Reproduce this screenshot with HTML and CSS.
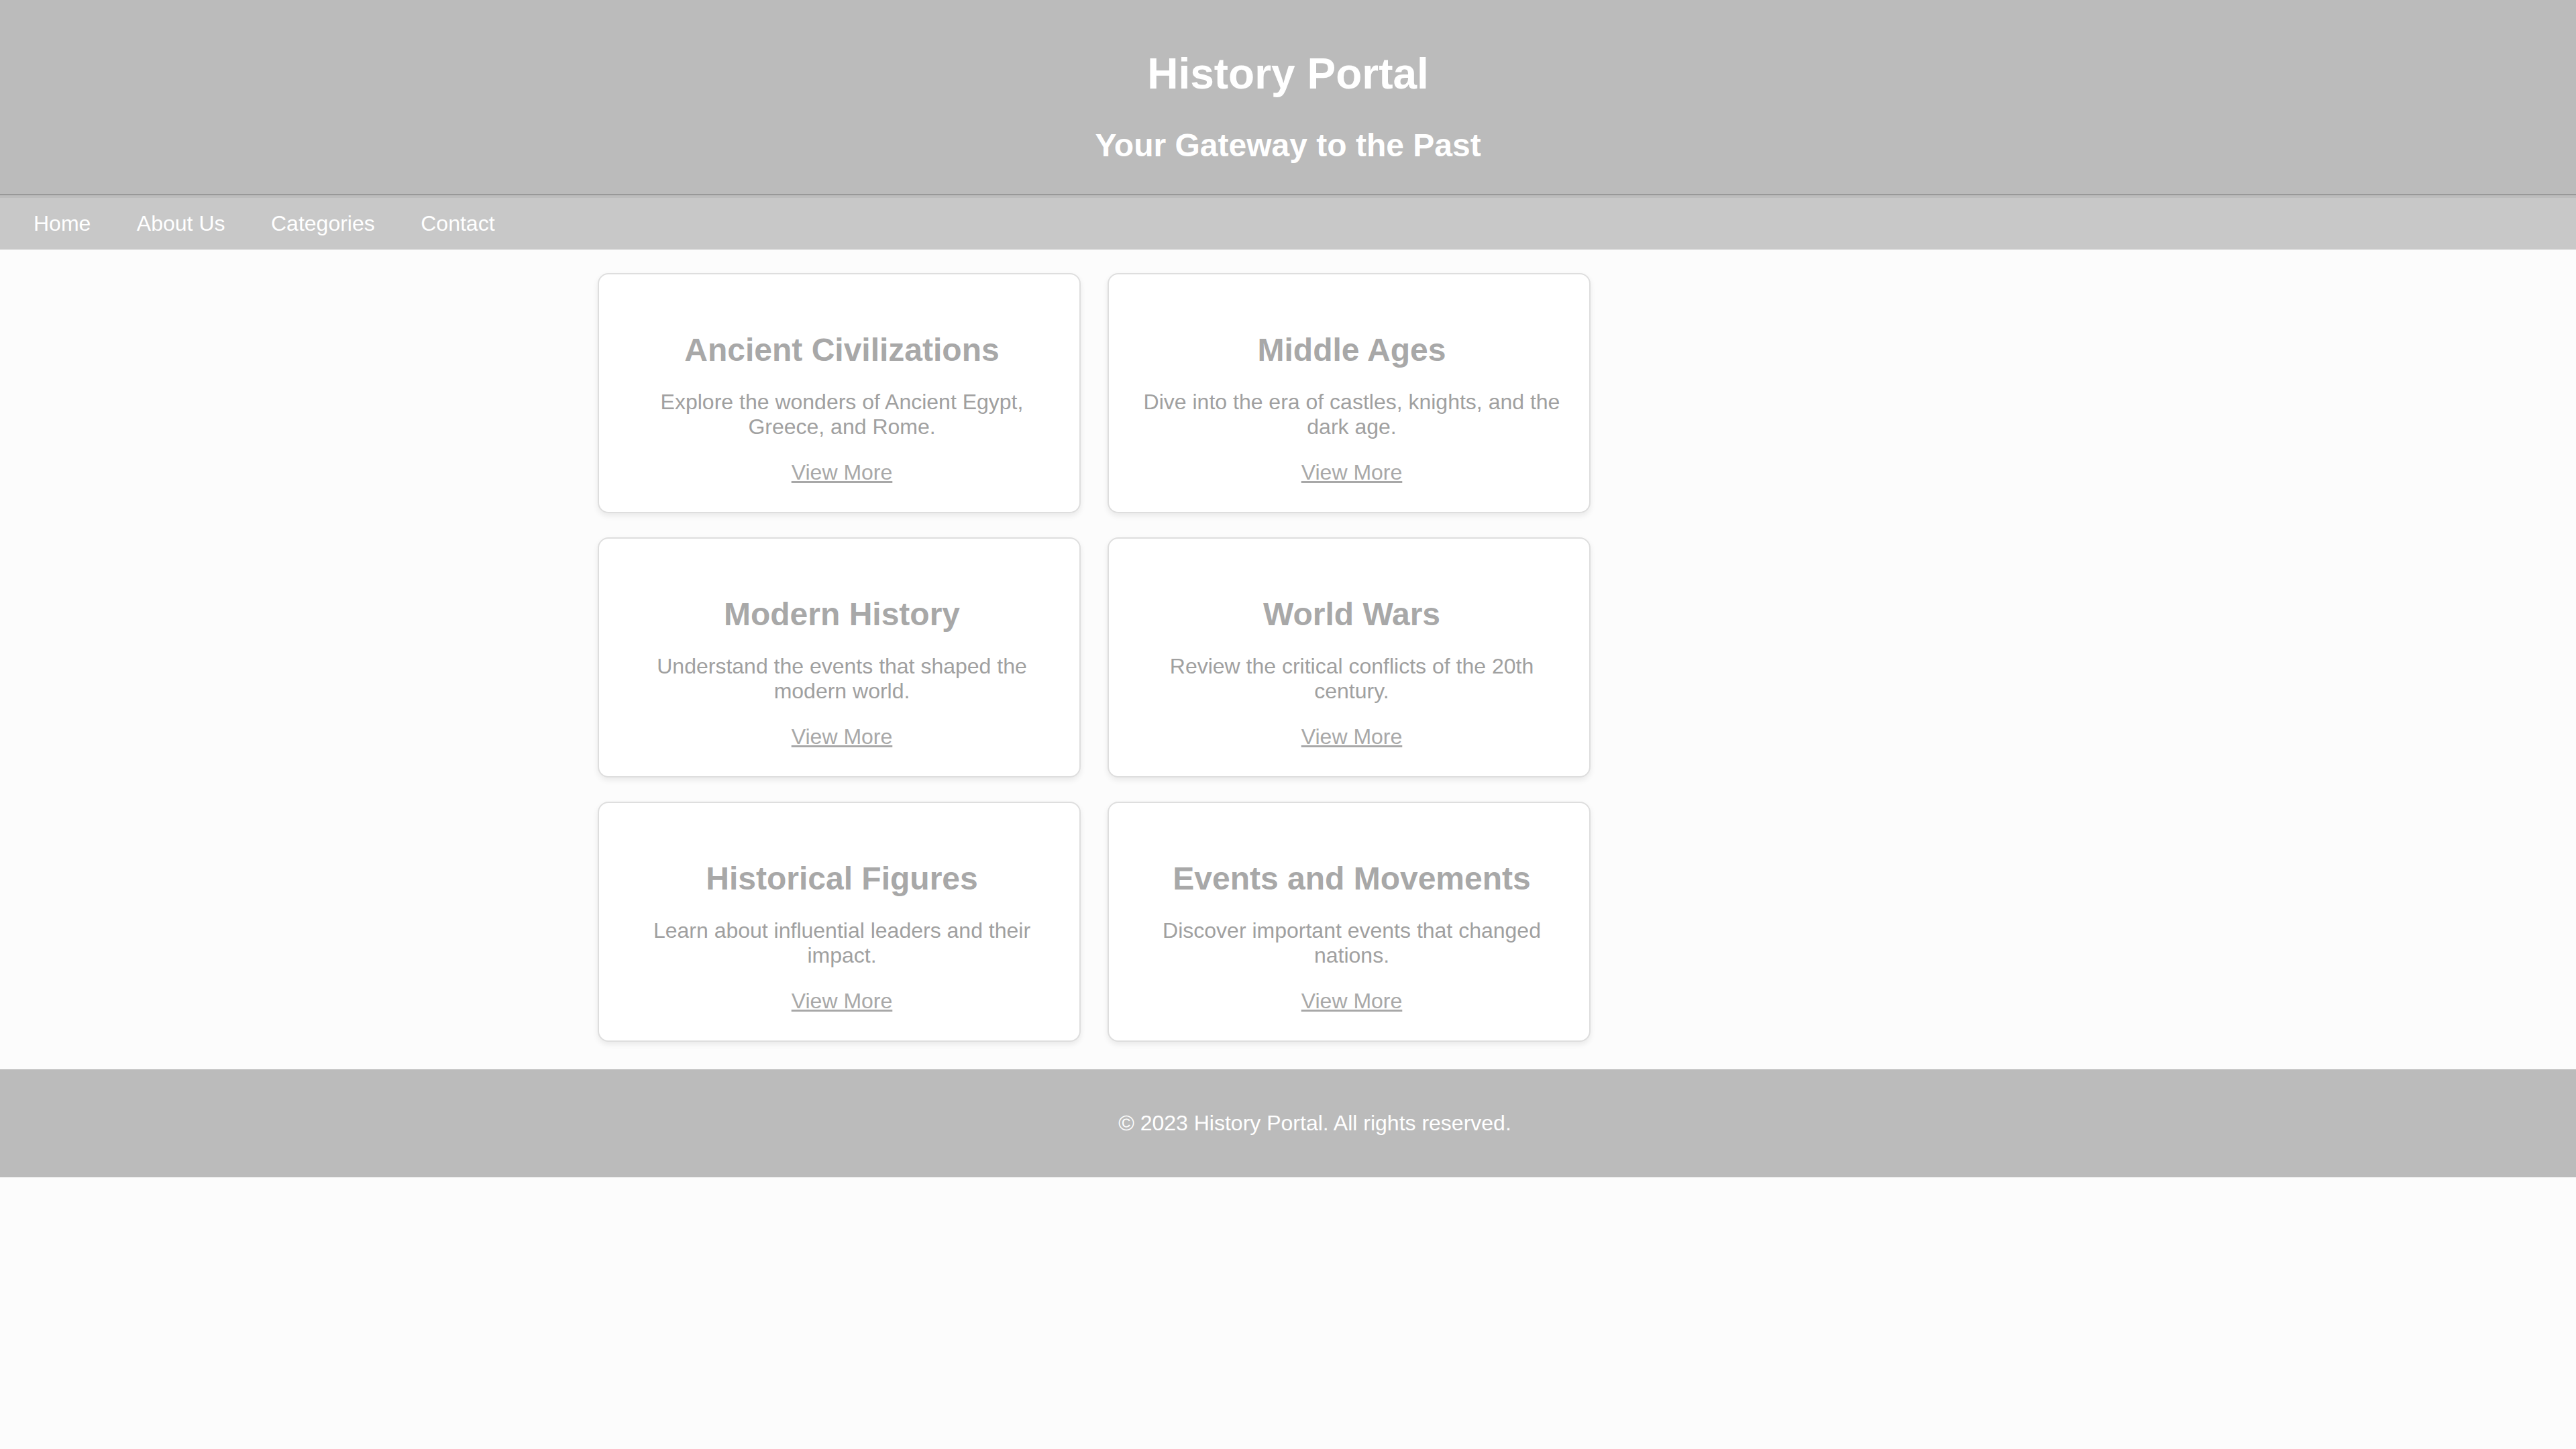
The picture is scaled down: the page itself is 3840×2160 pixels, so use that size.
FILE: index.html
```html
<!DOCTYPE html>
<html lang="en">
<head>
<meta charset="utf-8">
<title>History Portal</title>
<link rel="stylesheet" href="styles.css">
</head>
<body>
<header class="site-header">
  <h1 class="site-title">History Portal</h1>
  <h2 class="site-tagline">Your Gateway to the Past</h2>
</header>
<nav class="site-nav">
  <a href="#" class="nav-link">Home</a>
  <a href="#" class="nav-link">About Us</a>
  <a href="#" class="nav-link">Categories</a>
  <a href="#" class="nav-link">Contact</a>
</nav>
<main class="cards">
  <section class="card">
    <h2 class="card-title">Ancient Civilizations</h2>
    <p class="card-text">Explore the wonders of Ancient Egypt, Greece, and Rome.</p>
    <a href="#" class="card-link">View More</a>
  </section>
  <section class="card">
    <h2 class="card-title">Middle Ages</h2>
    <p class="card-text">Dive into the era of castles, knights, and the dark age.</p>
    <a href="#" class="card-link">View More</a>
  </section>
  <section class="card">
    <h2 class="card-title">Modern History</h2>
    <p class="card-text">Understand the events that shaped the modern world.</p>
    <a href="#" class="card-link">View More</a>
  </section>
  <section class="card">
    <h2 class="card-title">World Wars</h2>
    <p class="card-text">Review the critical conflicts of the 20th century.</p>
    <a href="#" class="card-link">View More</a>
  </section>
  <section class="card">
    <h2 class="card-title">Historical Figures</h2>
    <p class="card-text">Learn about influential leaders and their impact.</p>
    <a href="#" class="card-link">View More</a>
  </section>
  <section class="card">
    <h2 class="card-title">Events and Movements</h2>
    <p class="card-text">Discover important events that changed nations.</p>
    <a href="#" class="card-link">View More</a>
  </section>
</main>
<footer class="site-footer">
  <p class="footer-text">© 2023 History Portal. All rights reserved.</p>
</footer>
</body>
</html>
```
FILE: styles.css
```css
html, body {
  margin: 0;
  padding: 0;
}

body {
  background: #fcfcfc;
  font-family: "Liberation Sans", Arial, sans-serif;
  font-size: 32px;
  line-height: normal;
}

.site-header {
  background: #bbbbbb;
  color: #ffffff;
  text-align: center;
  padding: 73px 0 46px;
  border-bottom: 1px solid #6b6b6b;
}

.site-title {
  margin: 0 0 42px;
  font-size: 64px;
  font-weight: bold;
}

.site-tagline {
  margin: 0;
  font-size: 48px;
  font-weight: bold;
}

.site-nav {
  display: flex;
  gap: 68.5px;
  background: #c8c8c8;
  border-top: 4px solid #bdbdbd;
  padding: 20px 0 20px 50px;
}

.nav-link {
  color: #ffffff;
  text-decoration: none;
  font-size: 32px;
}

.cards {
  display: grid;
  grid-template-columns: 720px 720px;
  column-gap: 40px;
  row-gap: 36px;
  padding: 35px 0 41px 891px;
}

.card {
  background: #ffffff;
  border: 2px solid #dedede;
  border-radius: 16px;
  box-shadow: 0 4px 8px rgba(0, 0, 0, 0.08);
  padding: 43px 36px 40px 44px;
  text-align: center;
}

.card-title {
  margin: 42px 0 20px;
  font-size: 48px;
  font-weight: bold;
  color: #a8a8a8;
}

.card-text {
  margin: 32px 0 31px;
  font-size: 32px;
  color: #a0a0a0;
}

.card-link {
  font-size: 32px;
  color: #a8a8a8;
  text-decoration: underline;
}

.site-footer {
  background: #bbbbbb;
  color: #ffffff;
  text-align: center;
  padding: 62px 0 62px 80px;
}

.footer-text {
  margin: 0;
  font-size: 32px;
}
```
